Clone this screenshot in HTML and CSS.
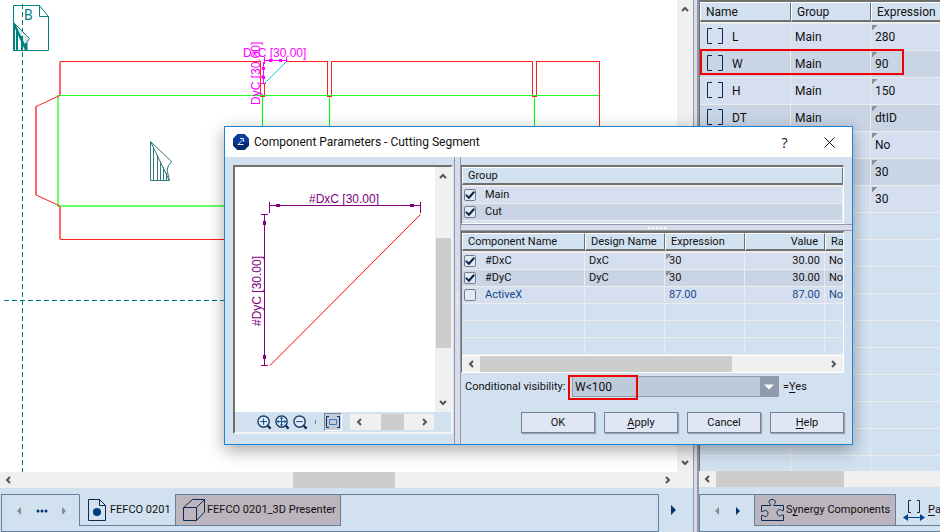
FILE: index.html
```html
<!DOCTYPE html>
<html lang="en">
<head>
<meta charset="utf-8">
<title>Component Parameters</title>
<link rel="stylesheet" href="styles.css">
</head>
<body>
<svg class="defs" aria-hidden="true">
  <symbol id="up" viewBox="0 0 8 8"><path d="M1 6 4 3 7 6" fill="none" stroke="#555" stroke-width="2"/></symbol>
  <symbol id="down" viewBox="0 0 8 8"><path d="M1 2 4 5 7 2" fill="none" stroke="#555" stroke-width="2"/></symbol>
  <symbol id="left" viewBox="0 0 8 8"><path d="M6 1 3 4 6 7" fill="none" stroke="#555" stroke-width="2"/></symbol>
  <symbol id="right" viewBox="0 0 8 8"><path d="M2 1 5 4 2 7" fill="none" stroke="#555" stroke-width="2"/></symbol>
  <symbol id="brackets" viewBox="0 0 16 16"><path d="M5 .5H.5v15H5M11 .5h4.500v15H11" fill="none" stroke="#0a2a55"/></symbol>
  <symbol id="lens" viewBox="0 0 16 16"><circle cx="7" cy="7" r="6" fill="#dfe9f5" stroke="#1c3d66" stroke-width="1.500"/><path d="m11.500 11.500 3 3" stroke="#0a2a55" stroke-width="2.500"/></symbol>
</svg>
<main class="app">
  <section class="workspace">
    <div class="stage">
      <svg class="drawing" role="img" aria-label="Box layout">
        <g fill="none" shape-rendering="crispEdges">
          <path stroke="#008080" stroke-dasharray="5 3" d="M22.500 4V472M4 300.500H677"/>
          <path stroke="#00ff00" d="M262.500 97V206M329.500 97V206M534.500 97V206"/>
          <path stroke="#66ff66" stroke-width="2" d="M58 95V206H599"/>
          <path stroke="#ff2020" d="M286.500 61.500H327.500V96.500H331.500V61.500H532.500V96.500H536.500V61.500H599.500V239.500H60.500V206M60.500 95V61.500H260.500V96.500H264.500V83.500"/>
          <path stroke="#ff6666" stroke-width="2" d="M36 106V195M60 62V95M60 206V239"/>
          <path stroke="#22ff22" d="M58 95.500H599"/>
        </g>
        <g fill="none">
          <path stroke="#ff2020" d="M36 106.500 60 95.500M36 195 60 206"/>
          <path stroke="#00d0d0" d="M264.500 83.500 286.500 61.500"/>
          <path fill="#e0e6e6" stroke="#008080" d="M14 23 29.500 38.500 27 42V50Z"/>
          <path stroke="#008080" d="M13.500 5.500H39.500L48.500 16.500V50.500H13.500ZM39.500 5.500V16.500H48.500"/>
          <path stroke="#008080" stroke-width="2" d="M14 24V50M17 29V50M22 36V50M26 43V50M14 24 26 50"/>
          <path stroke="#35797c" d="M150.500 141.500V180.500H169.500L167 170 168.500 165.500 171.500 161.500 150.500 141.500 169 180M153.500 148V180M157.500 155V180M160.500 161V180M163.500 167V180M166.500 173V180"/>
        </g>
        <text class="mark" x="24" y="20">B</text>
        <g class="dim dim-live">
          <text x="243" y="57">DxC [30.00]</text>
          <text transform="translate(260 105) rotate(-90)">DyC [30.00]</text>
          <path d="M264.500 57V64M286.500 57V62M264 60.500H287M263.500 62V83M261 83.500H266M271 60H280M263.500 70V78"/>
          <path class="arrow" d="M266 60.500l6-2v4zM285 60.500l-6-2v4zM263.500 64l-2 6h4zM263.500 82l-2-6h4z"/>
        </g>
      </svg>
      <div class="bar bar-v"><svg><use href="#up"/></svg><svg><use href="#down"/></svg></div>
    </div>
    <div class="bar bar-h bar-stage"><svg><use href="#left"/></svg><i class="space-a"></i><i class="thumb thumb-a"></i><i class="grow"></i><svg><use href="#right"/></svg></div>
    <div class="tab-row">
      <nav class="tabs">
        <div class="tab-nav"><svg viewBox="0 0 50 8" class="nav-a"><path d="M5 0 1 4 5 8Z" fill="#8c8c8c"/><path d="M46 0 50 4 46 8Z" fill="#8c8c8c"/><g fill="#003366"><circle cx="22" cy="4" r="1.500"/><circle cx="26" cy="4" r="1.500"/><circle cx="30" cy="4" r="1.500"/></g></svg></div>
        <button class="tab tab-current" type="button">
          <svg class="ic-file" viewBox="0 0 18 22"><path d="M.5.500H11.500L17.500 6.500V21.500H.500ZM11.500.500V6.500H17.500" fill="none" stroke="#0a2a55"/><circle cx="9" cy="13" r="4" fill="#003c80"/></svg>FEFCO 0201</button>
        <button class="tab tab-shade" type="button">
          <svg class="ic-cube" viewBox="0 0 22 22"><path d="M.5 8.500H13.500V21.500H.500ZM.5 8.500 9.500.500H21.500V13L13.500 21.500M13.500 8.500 21.500.500" fill="none" stroke="#0a2a55"/></svg>FEFCO 0201_3D Presenter</button>
        <div class="tab-fill"></div>
      </nav>
      <button class="tab-next" type="button" aria-label="Next"><svg viewBox="0 0 5 10"><path d="M0 0 5 5 0 10Z" fill="#003366"/></svg></button>
    </div>
  </section>
  <div class="divider"></div>
  <aside class="side">
    <div class="side-list">
      <table class="grid grid-side">
        <colgroup><col class="c-name"><col class="c-group"><col class="c-expr"></colgroup>
        <thead><tr><th>Name</th><th>Group</th><th>Expression</th></tr></thead>
        <tbody>
          <tr><td><svg><use href="#brackets"/></svg>L</td><td>Main</td><td class="edit">280</td></tr>
          <tr><td><svg><use href="#brackets"/></svg>W</td><td>Main</td><td class="edit">90</td></tr>
          <tr><td><svg><use href="#brackets"/></svg>H</td><td>Main</td><td class="edit">150</td></tr>
          <tr><td><svg><use href="#brackets"/></svg>DT</td><td>Main</td><td class="edit">dtID</td></tr>
          <tr><td></td><td></td><td class="edit">No</td></tr>
          <tr><td></td><td></td><td class="edit">30</td></tr>
          <tr><td></td><td></td><td class="edit">30</td></tr>
          <tr class="none"><td></td><td></td><td></td></tr>
          <tr class="none"><td></td><td></td><td></td></tr>
          <tr class="none"><td></td><td></td><td></td></tr>
          <tr class="none"><td></td><td></td><td></td></tr>
          <tr class="none"><td></td><td></td><td></td></tr>
          <tr class="none"><td></td><td></td><td></td></tr>
          <tr class="none"><td></td><td></td><td></td></tr>
          <tr class="none"><td></td><td></td><td></td></tr>
          <tr class="none"><td></td><td></td><td></td></tr>
          <tr class="none"><td></td><td></td><td></td></tr>
        </tbody>
      </table>
      <div class="ring ring-row"></div>
    </div>
    <div class="bar bar-h bar-side"><svg><use href="#left"/></svg><i class="thumb thumb-b"></i></div>
    <div class="tab-row">
      <nav class="tabs tabs-side">
        <div class="tab-nav"><svg viewBox="0 0 27 8" class="nav-b"><path d="M5 0 1 4 5 8Z" fill="#8c8c8c"/><path d="M22 0 26 4 22 8Z" fill="#003366"/></svg></div>
        <button class="tab tab-shade" type="button">
          <svg class="ic-puzzle" viewBox="0 0 23 22"><path d="M.5 6.500H9.500C10 4.500 8 4.500 8 3 8 1.500 9.500.500 11 .5S14.500 1.500 14.500 3C14.500 4.500 12.500 4.500 13 6.500H22.500V11.500C20.500 12 20 10.500 18.500 10.500 17 10.500 16 12 16 13.500S17 17 18.500 17C20 17 20.500 15.500 22.500 16V21.500H.500V16.500C2.500 16 3 17.500 4.500 17.500 6 17.500 7 16 7 14.500S6 11.500 4.500 11.500C3 11.500 2.500 13 .5 12.500Z" fill="none" stroke="#0a2a55"/></svg><span>S<u>y</u>nergy Components</span></button>
        <button class="tab tab-current" type="button">
          <svg class="ic-range" viewBox="0 0 22 21"><path d="M8 .5H5.500V12.500H8M14 .5H16.500V12.500H14" fill="none" stroke="#0a2a55"/><path d="M4 17.500H18" stroke="#00468c"/><path d="M5 14 0 17.500 5 21ZM17 14 22 17.500 17 21Z" fill="#00468c"/></svg><span><u>P</u>a</span></button>
      </nav>
    </div>
  </aside>
</main>

<div class="dialog" role="dialog" aria-labelledby="dlg-title">
  <header class="title-bar">
    <svg class="logo" viewBox="0 0 16 16"><path d="M4.500 0H11.500L16 4.500V11.500L11.500 16H4.500L0 11.500V4.500Z" fill="#0b3c9a"/><path d="M0 9H16V11.500L11.500 16H4.500L0 11.500Z" fill="#072a6c"/><path d="M4.500 10.500H10.500M5.500 10 10 5.500M7 4.500H10.500V7.500" fill="none" stroke="#e8eefa"/></svg>
    <h1 id="dlg-title">Component Parameters - Cutting Segment</h1>
    <button class="win-btn" type="button" aria-label="Help">?</button>
    <button class="win-btn" type="button" aria-label="Close"><svg viewBox="0 0 11 11"><path d="M.5.500 10.500 10.500M10.500.500.500 10.500" stroke="#111"/></svg></button>
  </header>
  <div class="dialog-body">
    <section class="preview">
      <div class="preview-stage">
        <svg class="shape" role="img" aria-label="Cutting segment">
          <path d="M35 198.500 185.500 47.500" stroke="#ff0000"/>
          <g class="dim">
            <text x="74" y="36">#DxC [30.00]</text>
            <text transform="translate(26 159) rotate(-90)">#DyC [30.00]</text>
            <path d="M34.500 35V46M185.500 35V46M34 38.500H186M29.500 47V199M26 47.500H33M26 198.500H33"/>
            <path class="arrow" d="M37 38.500l8-2v4zM183 38.500l-8-2v4zM29.500 50l-2 8h4zM29.500 196l-2-8h4z"/>
          </g>
        </svg>
        <div class="bar bar-v"><svg><use href="#up"/></svg><i class="thumb thumb-v"></i><svg><use href="#down"/></svg></div>
      </div>
      <div class="preview-tools">
        <button class="tool" type="button" aria-label="Zoom in"><svg viewBox="0 0 16 16"><use href="#lens"/><path d="M3.500 7H10.500M7 3.500V10.500" stroke="#00468c"/></svg></button>
        <button class="tool" type="button" aria-label="Fit"><svg viewBox="0 0 16 16"><use href="#lens"/><path d="M3 7H11M7 3V11" stroke="#00468c"/><path d="M2 7l2-2v4zM12 7l-2-2v4zM7 2l-2 2h4zM7 12l-2-2h4z" fill="#00468c"/></svg></button>
        <button class="tool" type="button" aria-label="Zoom out"><svg viewBox="0 0 16 16"><use href="#lens"/><path d="M3.500 7H10.500" stroke="#00468c"/></svg></button>
        <i class="tick"></i>
        <button class="tool tool-on" type="button" aria-label="Frame"><svg viewBox="0 0 14 12"><path d="M3 .5H.500V11.500H3M11 .5H13.500V11.500H11" fill="none" stroke="#0a2a55"/><path d="M3.500 3.500H10.500V8.500H3.500Z" fill="none" stroke="#3a78b8"/></svg></button>
        <div class="bar bar-h bar-mini"><svg><use href="#left"/></svg><i class="grow"></i><i class="thumb thumb-c"></i><i class="grow"></i><svg><use href="#right"/></svg></div>
      </div>
    </section>
    <div class="split-v"><i></i></div>
    <section class="params">
      <div class="frame frame-top">
        <table class="grid grid-dlg">
          <thead><tr><th>Group</th></tr></thead>
          <tbody>
            <tr><td><label><input type="checkbox" checked>Main</label></td></tr>
            <tr><td><label><input type="checkbox" checked>Cut</label></td></tr>
          </tbody>
        </table>
      </div>
      <div class="split-h"><i></i></div>
      <div class="frame">
        <div class="clip">
        <table class="grid grid-dlg grid-comp">
          <colgroup><col class="d-name"><col class="d-design"><col class="d-design"><col class="d-design"><col class="d-range"></colgroup>
          <thead><tr><th>Component Name</th><th>Design Name</th><th>Expression</th><th class="num">Value</th><th>Ra</th></tr></thead>
          <tbody>
            <tr><td><label><input type="checkbox" checked>#DxC</label></td><td>DxC</td><td class="edit">30</td><td class="num">30.00</td><td>No</td></tr>
            <tr><td><label><input type="checkbox" checked>#DyC</label></td><td>DyC</td><td class="edit">30</td><td class="num">30.00</td><td>No</td></tr>
            <tr class="linked"><td><label><input type="checkbox">ActiveX</label></td><td></td><td>87.00</td><td class="num">87.00</td><td>No</td></tr>
            <tr class="none"><td></td><td></td><td></td><td></td><td></td></tr>
            <tr class="none"><td></td><td></td><td></td><td></td><td></td></tr>
            <tr class="none"><td></td><td></td><td></td><td></td><td></td></tr>
          </tbody>
        </table>
        </div>
        <div class="bar bar-h bar-comp"><svg><use href="#left"/></svg><i class="thumb thumb-d"></i><i class="grow"></i><svg><use href="#right"/></svg></div>
      </div>
      <div class="condition">
        <label for="cond">Conditional visibility:</label>
        <div class="combo">
          <select id="cond"><option>W&lt;100</option></select>
          <svg viewBox="0 0 18 18"><path d="M4 7H14L9 12Z" fill="#fff"/></svg>
          <div class="ring ring-cond"></div>
        </div>
        <span>=<u>Y</u>es</span>
      </div>
      <div class="actions">
        <button type="button">OK</button>
        <button type="button"><u>A</u>pply</button>
        <button type="button">Cancel</button>
        <button type="button"><u>H</u>elp</button>
      </div>
    </section>
  </div>
</div>
</body>
</html>
```
FILE: styles.css
```css
* { box-sizing: border-box; }

body {
  margin: 0;
  height: 100vh;
  overflow: hidden;
  background: #d2e1f0;
  color: #111;
  font: 12px/16px Roboto, "Noto Sans", sans-serif;
}

button, select, input { font: inherit; color: inherit; margin: 0; }
svg { display: block; flex: none; }
.defs { position: absolute; width: 0; height: 0; }
u { text-underline-offset: 2px; }

.app { display: flex; height: 100%; }
.workspace { flex: 1; min-width: 0; display: flex; flex-direction: column; }
.stage { flex: 1; min-height: 0; display: flex; background: #fff; }
.drawing { flex: 1; min-width: 0; height: 100%; }

.dim { fill: #800080; stroke: none; font: 12px "Liberation Sans", sans-serif; }
.dim path { fill: none; stroke: #800080; shape-rendering: crispEdges; }
.dim .arrow { fill: #800080; stroke: none; }
.dim-live { fill: #ff00ff; }
.dim-live path { stroke: #ff00ff; }
.dim-live .arrow { fill: #ff00ff; }
.mark { fill: #008080; font-size: 14px; }

/* scroll bars */
.bar { display: flex; flex: none; align-items: center; background: #f0f0f0; }
.bar > svg { width: 8px; height: 8px; }
.bar-v { width: 16px; flex-direction: column; justify-content: space-between; padding: 5px 0; }
.bar-h { height: 16px; padding: 0 5px; }
.thumb { background: #cdcdcd; align-self: stretch; }
.grow { flex: 1; }
.bar-stage { padding: 0 21px 0 4px; }
.space-a { width: 42%; }
.thumb-a { width: 102px; }

/* tab strips */
.tab-row { display: flex; flex: none; height: 44px; padding: 6px 0 0 1px; }
.tabs { flex: 1; display: flex; min-width: 0; padding-bottom: 5px; border: solid #64829e; border-width: 0 1px 1px; }
.tab-nav { display: flex; align-items: center; justify-content: center; width: 77px; border-top: 1px solid #64829e; }
.nav-a { width: 50px; height: 8px; }
.nav-b { width: 27px; height: 8px; }
.tab { display: flex; align-items: center; padding: 0; background: none; border: 1px solid #64829e; border-radius: 0; white-space: nowrap; flex: none; font-size: 11px; }
.tab-current { gap: 4px; border-top-color: transparent; border-right: 0; padding: 0 4px 0 8px; width: 96px; }
.tab-shade { gap: 2px; padding: 0 4px 0 7px; background: #bcb5bd; }
.tab-fill { flex: 1; border-top: 1px solid #64829e; }
.tab-next { width: 34px; padding: 0 0 6px 12px; border: 0; background: none; }
.tab-next svg { width: 5px; height: 10px; }
.ic-file { width: 18px; height: 22px; }
.ic-cube { width: 22px; height: 22px; }
.ic-puzzle { width: 23px; height: 22px; }
.ic-range { width: 22px; height: 21px; }

.divider { width: 6px; background: #d8dcea; border: solid #9497a5; border-width: 0 2px 0 1px; }

/* parameter list */
.side { width: 241px; display: flex; flex-direction: column; overflow: hidden; }
.side-list { flex: 1; min-height: 0; position: relative; overflow: hidden; border: solid #70706e; border-width: 2px 0 0 1px; }
.grid { border-collapse: separate; border-spacing: 0; table-layout: fixed; width: 100%; }
.grid th { padding: 1px 6px 0 5px; text-align: left; font-weight: normal; background: #d2e1f0; border: solid; border-width: 1px 1px 2px 1px; border-color: #fff #70706e #70706e #fff; white-space: nowrap; overflow: hidden; }
.grid td { padding: 0 4px; border: solid #ececec; border-width: 0 1px 1px 0; background-color: #d5dfef; white-space: nowrap; overflow: hidden; }
.grid tbody tr:nth-child(even) td { background-color: #c9d4e5; }
.grid tbody tr.none td { background-color: #d2e1f0; }
.grid .num { text-align: right; }
.grid td.edit { background-image: linear-gradient(135deg, #8f9092 0 4px, transparent 4px); background-repeat: no-repeat; background-size: 8px 8px; background-position: 1px 1px; }

.grid-side { width: 270px; }
.c-name { width: 91px; }
.c-group { width: 80px; }
.grid-side th { height: 20px; line-height: 16px; }
.grid-side td { height: 27px; line-height: 20px; }
.grid-side tbody tr:first-child td { height: 29px; border-top-width: 2px; }
.grid-side td svg { display: inline-block; width: 16px; height: 16px; margin: 0 9px 0 3px; vertical-align: -3px; }
.bar-side { padding-left: 4px; gap: 5px; margin-bottom: 1px; }
.thumb-b { width: 128px; }
.side .tab-row { padding-left: 0; height: 44px; }
.tabs-side { border-right: 0; }
.tabs-side .tab-nav { width: 54px; flex: none; }
.tabs-side .tab-shade { width: 142px; padding-left: 6px; }
.tabs-side .tab-current { border-left: 0; gap: 3px; flex: 1; padding: 0 0 0 7px; }

.ring { position: absolute; border: 2px solid #f00000; pointer-events: none; }
.ring-row { left: 0; top: 47px; width: 204px; height: 26px; }
.ring-cond { left: -5px; top: -2px; width: 70px; height: 25px; }

/* dialog */
.dialog {
  position: absolute;
  left: 224px;
  top: 126px;
  width: 629px;
  background: #d2e1f0;
  border: 1px solid #1883d7;
  box-shadow: 0 5px 16px rgba(0, 0, 0, .35);
  font-size: 11px;
  line-height: 14px;
}
.title-bar { display: flex; align-items: center; height: 30px; padding: 0 0 0 8px; background: #fff; }
.title-bar h1 { flex: 1; margin: 0 0 0 5px; font-size: 12px; line-height: 16px; font-weight: normal; }
.logo { width: 16px; height: 16px; }
.win-btn { display: flex; align-items: center; justify-content: center; width: 45px; height: 28px; padding: 0; border: 0; background: none; font: 14px "Open Sans", sans-serif; }
.win-btn svg { width: 11px; height: 11px; }

.dialog-body { display: flex; }
.preview { display: flex; flex-direction: column; width: 220px; margin: 8px 1px 10px 8px; border: 2px solid; border-color: #70706e #f4f4f4 #f4f4f4 #70706e; }
.preview-stage { flex: 1; display: flex; background: #fff; }
.shape { flex: 1; min-width: 0; height: 245px; }
.thumb-v { height: 110px; align-self: auto; width: 15px; margin-top: 6px; }
.preview-tools { display: flex; align-items: center; height: 20px; padding-left: 22px; }
.tool { display: flex; padding: 0; border: 0; background: none; margin-right: 3px; }
.tool svg { width: 15px; height: 15px; }
.tick { width: 1px; height: 4px; background: #64829e; margin: 0 8px 0 4px; }
.tool-on { width: 18px; height: 18px; align-items: center; justify-content: center; background: #c0cbdc; border: 1px solid; border-color: #7d8896 #fff #fff #7d8896; margin-right: 8px; }
.tool-on svg { width: 14px; height: 12px; }
.bar-mini { width: 84px; }
.thumb-c { width: 23px; }

.split-v { display: flex; align-items: center; justify-content: center; width: 7px; background: #d8dcea; border: solid #9497a5; border-width: 0 1px; }
.split-v i { width: 1px; height: 18px; border-left: 1px dotted #fff; }
.split-h { display: flex; align-items: center; justify-content: center; height: 7px; background: #d8dcea; border: solid #9497a5; border-width: 1px 0; }
.split-h i { width: 18px; height: 2px; border-top: 2px dotted #fff; }

.params { flex: 1; min-width: 0; }
.frame { margin-right: 8px; border: solid; border-width: 2px 1px 1px 1px; border-color: #70706e #fff #fff #70706e; }
.frame-top { margin-top: 8px; padding-bottom: 2px; }
.clip { overflow: hidden; }
.grid-dlg th { height: 18px; line-height: 14px; }
.grid-dlg td { height: 17px; line-height: 16px; }
.grid-dlg tbody tr:first-child td { height: 19px; border-top-width: 2px; }
.grid-comp { width: 422px; }
.d-name { width: 123px; }
.d-design { width: 80px; }
.grid-dlg label { display: flex; align-items: center; gap: 9px; height: 16px; margin-left: -2px; }
.linked { color: #15498c; }
input[type="checkbox"] { appearance: none; position: relative; width: 12px; height: 12px; border: 1px solid #737d8c; border-radius: 2px; background: #e3e9f4; }
input[type="checkbox"]:checked::after { content: ""; display: block; width: 10px; height: 10px; background: #08264d; clip-path: polygon(10% 40%, 38% 62%, 85% 10%, 100% 26%, 40% 92%, 4% 58%); }
.thumb-d { width: 252px; margin-left: 5px; }
.bar-comp { height: 17px; border-top: 1px solid #fff; }

.condition { display: flex; align-items: center; margin-top: 3px; padding-left: 4px; }
.condition > label { width: 107px; }
.combo { position: relative; display: flex; width: 207px; height: 21px; margin-right: 4px; border: 1px solid #8f9baa; background: #becada; }
.combo select { flex: 1; appearance: none; border: 0; background: none; padding: 0 2px; border-radius: 0; font-size: 12px; }
.combo > svg { width: 18px; height: 19px; background: #8f9baa; }
.actions { display: flex; justify-content: flex-end; gap: 9px; margin: 15px 8px 8px 0; }
.actions button { width: 74px; height: 21px; padding: 0; border: 1px solid #7d8090; border-radius: 0; background: #e0e7f4; box-shadow: 1px 1px 1px rgba(60, 70, 90, .4); }
```
